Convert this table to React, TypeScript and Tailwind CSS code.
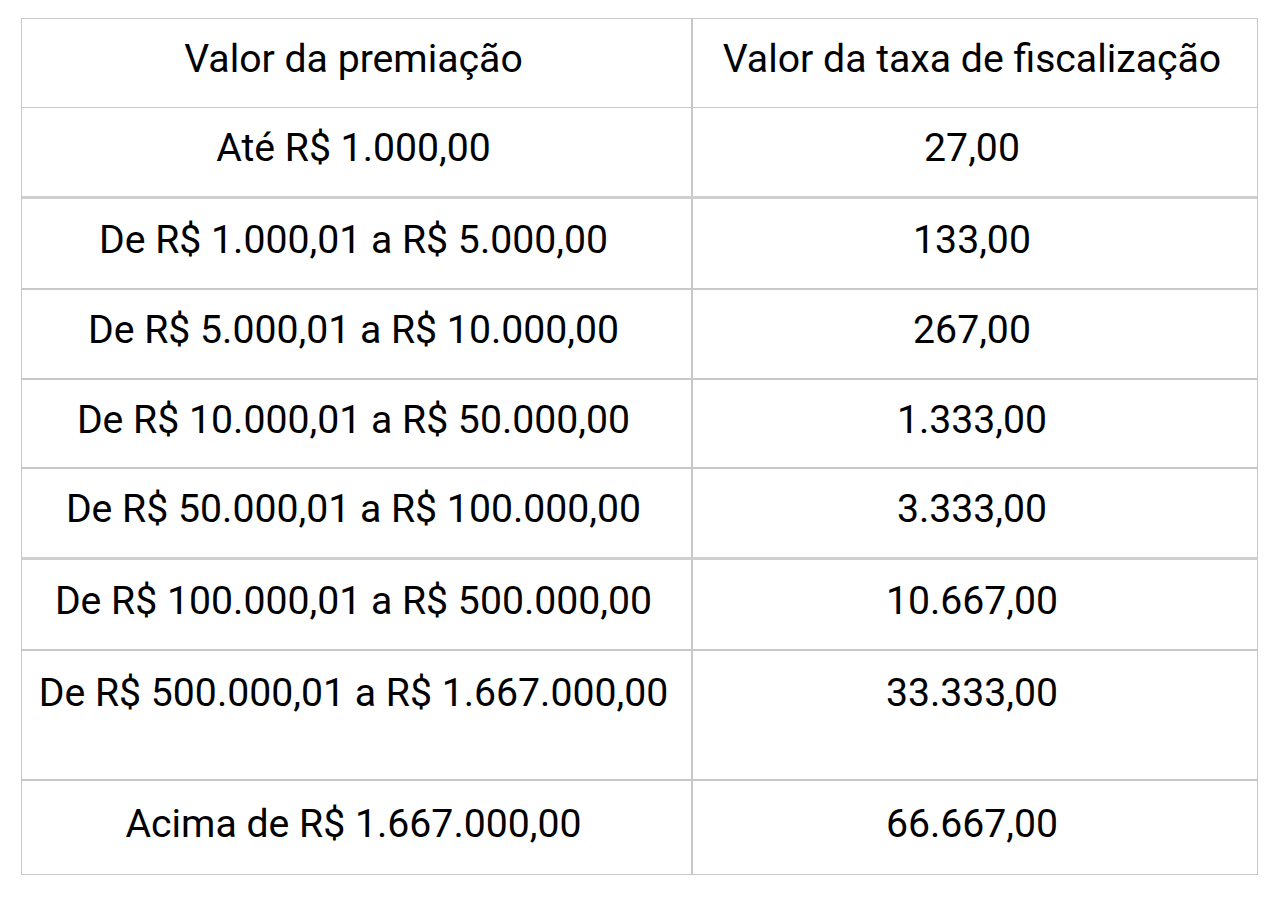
import React from "react";

const rows: { a: string; b: string; h: string; thick?: boolean; top?: boolean }[] = [
  { a: "Até R$ 1.000,00", b: "27,00", h: "h-[91px]", thick: true },
  { a: "De R$ 1.000,01 a R$ 5.000,00", b: "133,00", h: "h-[91px]" },
  { a: "De R$ 5.000,01 a R$ 10.000,00", b: "267,00", h: "h-[90px]" },
  { a: "De R$ 10.000,01 a R$ 50.000,00", b: "1.333,00", h: "h-[89px]" },
  { a: "De R$ 50.000,01 a R$ 100.000,00", b: "3.333,00", h: "h-[91px]", thick: true },
  { a: "De R$ 100.000,01 a R$ 500.000,00", b: "10.667,00", h: "h-[91px]" },
  { a: "De R$ 500.000,01 a R$ 1.667.000,00", b: "33.333,00", h: "h-[130px]", top: true },
];

export default function App() {
  return (
    <div className="w-[1280px] h-[900px] bg-white pt-[18px] pl-[21px]" style={{ fontFamily: "Roboto, 'Liberation Sans', sans-serif" }}>
      <div className="w-[1237px] border border-[#c8c8c8] text-[39.2px] leading-[46px] text-black">
        <div className="flex h-[89px] border-b border-[#c8c8c8]">
          <div className="w-[671px] border-r-[2px] border-[#c8c8c8] flex items-center justify-center pb-[8px] pr-[6px]">Valor da premiação</div>
          <div className="flex-1 flex items-center justify-center pb-[8px] pr-[6px]">Valor da taxa de fiscalização</div>
        </div>
        {rows.map((r, i) => (
          <div
            key={i}
            className={`flex ${r.h} ${r.thick ? "border-b-[3px] border-[#cfcfcf]" : "border-b-[2px] border-[#c8c8c8]"}`}
          >
            <div className={`w-[671px] border-r-[2px] border-[#c8c8c8] flex justify-center pr-[6px] ${r.top ? "items-start pt-[19px]" : "items-center pb-[8px]"}`}>{r.a}</div>
            <div className={`flex-1 flex justify-center pr-[6px] ${r.top ? "items-start pt-[19px]" : "items-center pb-[8px]"}`}>{r.b}</div>
          </div>
        ))}
        <div className="flex h-[93px]">
          <div className="w-[671px] border-r-[2px] border-[#c8c8c8] flex items-center justify-center pb-[8px] pr-[6px]">Acima de R$ 1.667.000,00</div>
          <div className="flex-1 flex items-center justify-center pb-[8px] pr-[6px]">66.667,00</div>
        </div>
      </div>
    </div>
  );
}
